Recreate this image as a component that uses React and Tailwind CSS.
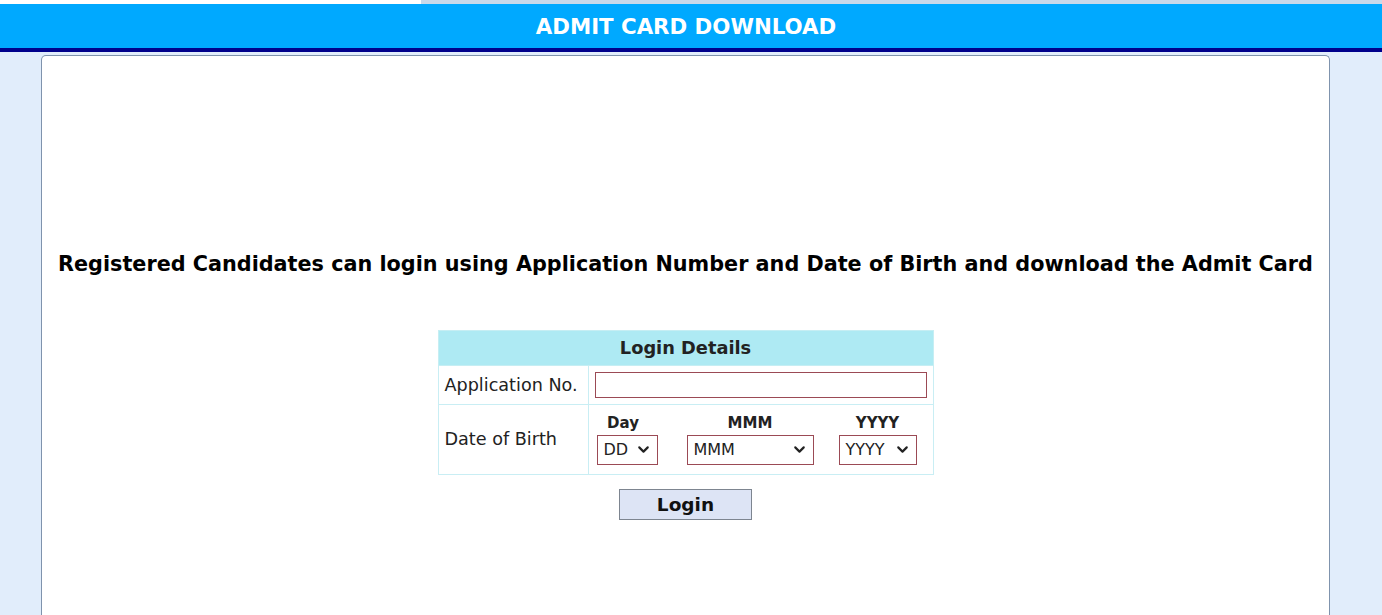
import { ChevronDown } from "lucide-react";

const font = { fontFamily: '"DejaVu Sans", Verdana, sans-serif' };

function Select({ value, width }) {
    return (
        <div
            className={`flex items-center justify-between h-[30px] border border-[#9b4a55] bg-white pl-[6px] pr-[5px] text-[16px] text-[#222] ${width}`}
        >
            <span>{value}</span>
            <ChevronDown size={17} strokeWidth={3} className="text-[#222]" />
        </div>
    );
}

export default function App() {
    return (
        <div className="min-h-[615px] bg-[#e1edfb] overflow-hidden" style={font}>
            {/* top strip */}
            <div className="flex h-[4px]">
                <div className="w-[421px] bg-white" />
                <div className="flex-1 bg-[#c9d9ea]" />
            </div>

            {/* Title bar */}
            <div className="h-[44px] bg-[#00a9ff] flex items-center justify-center border-b-[4px] border-[#00008b] box-content">
                <h1 className="text-white font-bold text-[21.3px] mt-[2px] mr-[10px]">ADMIT CARD DOWNLOAD</h1>
            </div>

            {/* Card */}
            <div className="mx-[41px] mt-[3px] h-[600px] bg-white border border-[#7f93ad] border-b-0 rounded-t-[5px] w-[1289px]">
                <p className="pt-[193px] text-center font-bold text-[20.75px] text-black leading-[30px]">
                    Registered Candidates can login using Application Number and Date of Birth and download the Admit Card
                </p>

                <div className="flex justify-center mt-[51px]">
                    <table className="border-collapse w-[496px] text-[#222]">
                        <tbody>
                            <tr>
                                <td colSpan={2} className="h-[35px] bg-[#aeeaf3] text-center font-bold text-[17.8px] border border-[#c6eef3]">
                                    Login Details
                                </td>
                            </tr>
                            <tr>
                                <td className="h-[39px] w-[150px] border border-[#c9eef4] pl-[6px] text-[17.6px]">
                                    Application No.
                                </td>
                                <td className="border border-[#c9eef4] px-[6px]">
                                    <div className="h-[26px] border border-[#9b4a55] bg-white" />
                                </td>
                            </tr>
                            <tr>
                                <td className="h-[70px] border border-[#c9eef4] pl-[6px] text-[17.6px]">Date of Birth</td>
                                <td className="border border-[#c9eef4] pl-[8px] pb-[2px]">
                                    <div className="flex items-end">
                                        <div className="flex flex-col items-center">
                                            <span className="font-bold text-[15px] leading-[20px] mb-[2px] pr-[8px]">Day</span>
                                            <Select value="DD" width="w-[61px]" />
                                        </div>
                                        <div className="flex flex-col items-center ml-[29px]">
                                            <span className="font-bold text-[15px] leading-[20px] mb-[2px]">MMM</span>
                                            <Select value="MMM" width="w-[127px]" />
                                        </div>
                                        <div className="flex flex-col items-center ml-[25px]">
                                            <span className="font-bold text-[15px] leading-[20px] mb-[2px]">YYYY</span>
                                            <Select value="YYYY" width="w-[78px]" />
                                        </div>
                                    </div>
                                </td>
                            </tr>
                        </tbody>
                    </table>
                </div>

                <div className="flex justify-center mt-[14px]">
                    <button className="w-[133px] h-[31px] bg-[#dde4f5] border border-[#7d8590] font-bold text-[18.5px] text-[#111]">
                        Login
                    </button>
                </div>
            </div>
        </div>
    );
}
